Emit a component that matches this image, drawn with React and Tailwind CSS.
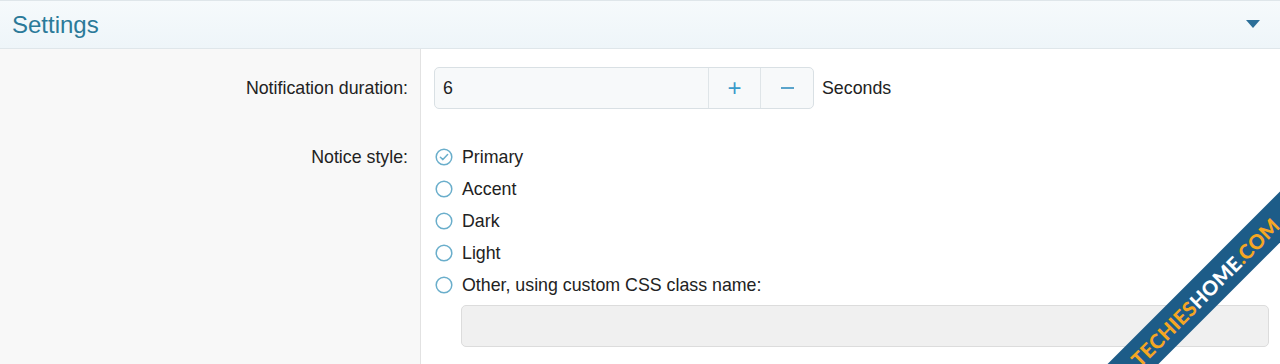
import React from 'react';

const styles = ['Primary', 'Accent', 'Dark', 'Light', 'Other, using custom CSS class name:'];

function Radio({ checked }) {
  return (
    <svg width="18" height="18" viewBox="0 0 18 18" className="shrink-0">
      <circle cx="9" cy="9" r="7.8" fill="#fff" stroke="#6aaecb" strokeWidth="1.5" />
      {checked && (
        <path d="M5.4 9.2 L7.9 11.6 L12.6 6.6" fill="none" stroke="#6aaecb" strokeWidth="1.5" strokeLinecap="round" strokeLinejoin="round" />
      )}
    </svg>
  );
}

export default function App() {
  return (
    <div className="relative w-[1280px] h-[364px] overflow-hidden bg-white font-['Liberation_Sans',Arial,sans-serif] text-[#222]">
      {/* Header */}
      <div className="h-[49px] flex items-center justify-between pl-3 pr-5 border-b border-t border-[#dfe6ea] bg-gradient-to-b from-[#f6fafc] to-[#eef5f9]">
        <h1 className="text-[24px] text-[#2b7a99] leading-none">Settings</h1>
        <svg width="14" height="9" viewBox="0 0 14 9">
          <path d="M0 0 H14 L7 8 Z" fill="#2b6e98" />
        </svg>
      </div>

      <div className="flex h-[315px]">
        {/* Labels */}
        <div className="w-[421px] shrink-0 bg-[#f8f8f8] border-r border-[#e2e2e2] pr-[12px] pt-[18px] text-right text-[17.8px]">
          <div className="h-[42px] flex items-center justify-end">Notification duration:</div>
          <div className="mt-[32px] h-[32px] flex items-center justify-end">Notice style:</div>
        </div>

        {/* Controls */}
        <div className="flex-1 pl-[13px] pt-[18px] pr-3 text-[17.8px]">
          <div className="flex items-center gap-2">
            <div className="flex h-[42px] w-[380px] rounded-[5px] border border-[#d9e0e4] bg-[#f7f9fa]">
              <div className="flex-1 flex items-center pl-2">6</div>
              <button className="w-[52px] border-l border-[#dfe5e8] flex items-center justify-center text-[#3a9bcb] text-[24px] font-light">+</button>
              <button className="w-[53px] border-l border-[#dfe5e8] flex items-center justify-center">
                <span className="block w-[13px] h-[2px] bg-[#5aa4cb]" />
              </button>
            </div>
            <span>Seconds</span>
          </div>

          <div className="mt-[32px] flex flex-col">
            {styles.map((s, i) => (
              <label key={s} className="h-[32px] flex items-center gap-[9px] pl-[1px]">
                <Radio checked={i === 0} />
                <span>{s}</span>
              </label>
            ))}
          </div>
          <div className="ml-[27px] mt-[4px] h-[42px] rounded-[5px] border border-[#dcdcdc] bg-[#f0f0f0] w-[808px]" />
        </div>
      </div>

      {/* Watermark ribbon */}
      <div className="absolute left-[1035px] top-[274px] w-[340px] h-[36px] -rotate-45 bg-[#1d5c88] flex items-center justify-center font-['Lato',sans-serif] font-black text-[20px] tracking-[0.3px]">
        <span className="text-[#f5a623]">TECHIES</span>
        <span className="text-white">HOME</span>
        <span className="text-[#f5a623]">.COM</span>
      </div>
    </div>
  );
}
